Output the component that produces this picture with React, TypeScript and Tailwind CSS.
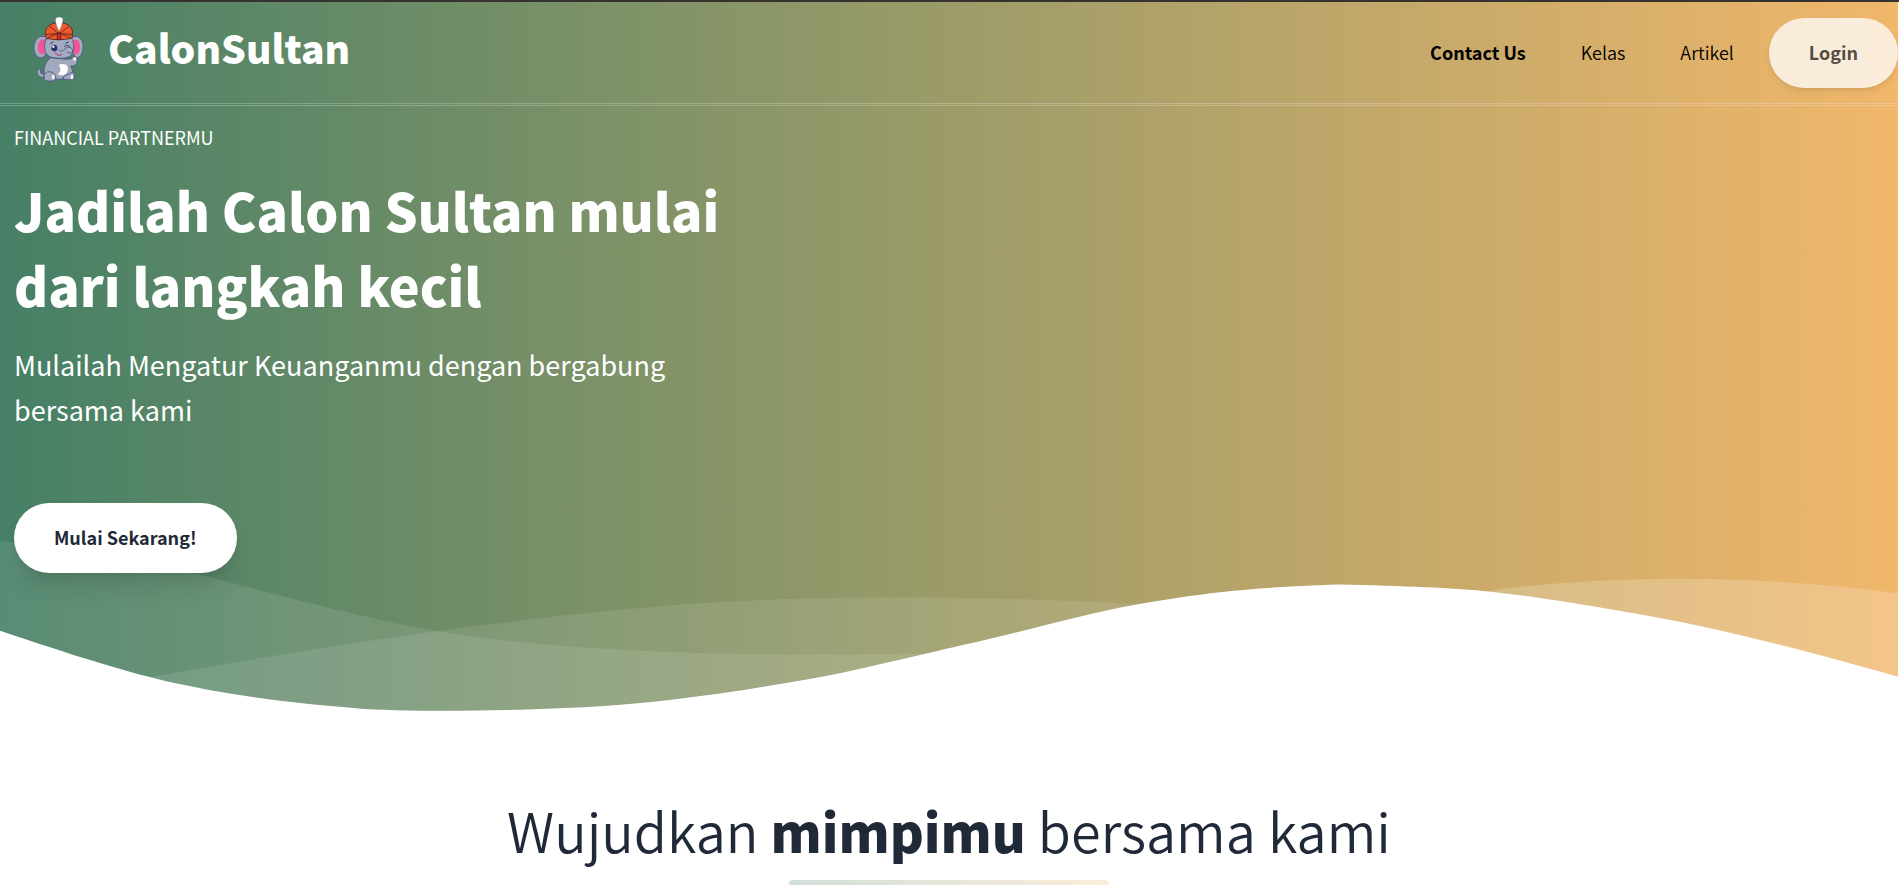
import React from "react";

function Elephant() {
  return (
    <svg viewBox="40 22 153 201" className="h-[67px] w-[51px] shrink-0" role="img" aria-label="CalonSultan logo">
      <g stroke="#4b4f86" strokeWidth="2.5" strokeLinecap="round" strokeLinejoin="round">
        <path d="M74 206C60 208 52 200 53 188C52 180 61 178 63 185C60 192 64 198 76 196" fill="#a3a9bd" />
        <path d="M80 86C62 76 45 90 43 112C41 134 52 150 66 147C74 145 80 138 82 128Z" fill="#a3a9bd" />
        <path d="M78 94C62 88 53 104 55 120C57 138 70 142 80 130Z" fill="#f2549a" stroke="none" />
        <path d="M156 88C172 76 188 88 190 108C191 130 184 146 170 148L158 130Z" fill="#a3a9bd" />
        <path d="M158 96C172 88 182 98 181 116C181 132 174 138 162 138Z" fill="#f2549a" stroke="none" />
        <path d="M92 148C78 158 70 178 74 198C80 216 150 216 160 200C160 186 156 176 152 172C166 174 174 166 173 150C172 142 158 140 156 150L144 152Z" fill="#a3a9bd" />
        <path d="M79 92C72 108 73 130 84 140C96 151 138 152 152 142C164 132 165 106 157 90C136 82 98 82 79 92Z" fill="#a3abc0" />
        <path d="M117 168C138 162 148 172 144 186C141 200 124 204 114 196C124 190 124 178 117 168Z" fill="#fff" stroke="none" />
        <path d="M73 204C72 188 92 184 104 196C112 208 108 217 98 217H84C76 217 72 212 73 204Z" fill="#a3a9bd" />
        <path d="M130 206C136 198 148 198 154 192C162 188 166 198 163 207C161 215 150 213 142 213C136 213 130 212 130 206Z" fill="#a3a9bd" />
        <path d="M118 124C124 130 132 128 136 120C142 114 154 114 158 122C164 132 152 138 142 130" fill="none" />
      </g>
      <g fill="none" stroke="#31356e" strokeWidth="3" strokeLinecap="round">
        <path d="M93 104L100 100M138 104L146 100M134 113C140 108 146 110 150 114" />
        <path d="M106 130C109 138 117 143 125 138" stroke="#b02a6b" />
      </g>
      <ellipse cx="104" cy="118" rx="9" ry="10" fill="#263070" />
      <circle cx="101" cy="114" r="3.5" fill="#fff" />
      <g fill="#fff">
        <ellipse cx="101" cy="205" rx="4" ry="7" />
        <ellipse cx="157" cy="205" rx="4" ry="7" />
        <ellipse cx="165" cy="151" rx="4" ry="5" />
      </g>
      <g stroke="#5b1d1b" strokeWidth="2.5" strokeLinejoin="round">
        <path d="M78 78C74 54 94 42 118 42C142 42 162 54 158 78C159 84 156 90 150 90C130 94 104 94 86 90C80 89 77 84 78 78Z" fill="#ee5a2b" />
        <path d="M79 78C98 74 138 74 158 78M117 76C108 66 96 57 89 54M120 76C130 66 142 57 148 54M84 88C96 80 106 78 113 77M152 88C140 80 130 78 123 77" fill="none" />
        <path d="M114 72H122L124 93H112Z" fill="#b8301f" />
        <path d="M118 68C112 56 108 44 107 34C108 26 114 25 118 25C123 25 130 26 130 35C128 46 124 58 118 68Z" fill="#fff" stroke="#777" strokeWidth="1.5" />
      </g>
    </svg>
  );
}

function Waves() {
  return (
    <svg viewBox="0 0 1428 174" className="-mt-[120px] block w-full" aria-hidden="true" fill="#fff">
      <g transform="translate(-2 44)">
        <path
          d="M0,0 C90.7283404,0.927527913 147.912752,27.187927 291.910178,59.9119003 C387.908462,81.7278826 543.605069,89.334785 759,82.7326078 C469.336065,156.254352 216.336065,153.6679 0,74.9732496"
          opacity="0.1"
        />
        <path
          d="M100,104.708498 C277.413333,72.2345949 426.147877,52.5246657 546.203633,45.5787101 C666.259389,38.6327546 810.524845,41.7979068 979.000999,55.0741668 C931.069965,56.122511 810.303266,74.8455141 616.699903,111.243176 C423.096539,147.640838 250.863238,145.462612 100,104.708498 Z"
          opacity="0.1"
        />
        <path
          d="M1046,51.6521276 C1130.83045,29.328812 1279.08318,17.607883 1439,40.1656806 L1439,120 C1271.17211,77.9435312 1140.17211,55.1609071 1046,51.6521276 Z"
          opacity="0.2"
        />
      </g>
      <path
        transform="translate(-4 76)"
        d="M0.457,34.035 C57.086,53.198 98.208,65.809 123.822,71.865 C181.454,85.495 234.295,90.29 272.033,93.459 C311.355,96.759 396.635,95.801 461.025,91.663 C486.76,90.01 518.727,86.372 556.926,80.752 C595.747,74.596 622.372,70.008 636.799,66.991 C663.913,61.324 712.501,49.503 727.605,46.128 C780.47,34.317 818.839,22.532 856.324,15.904 C922.689,4.169 955.676,2.522 1011.185,0.432 C1060.705,1.477 1097.39,3.129 1121.236,5.387 C1161.703,9.219 1208.621,17.821 1235.4,22.304 C1285.855,30.748 1354.351,47.432 1440.886,72.354 L1441.191,104.352 L1.121,104.031 L0.457,34.035 Z"
      />
    </svg>
  );
}

function Header() {
  return (
    <header>
      <div className="flex h-[101px] items-center justify-between">
        <a href="#" className="flex items-center gap-6 pb-1.5 pl-[33px] text-[39px] leading-[60px] font-black text-white">
          <Elephant />
          <span className="pb-1.5">CalonSultan</span>
        </a>
        <nav className="flex items-center text-[18px] leading-[30px] text-black">
          <a href="#contact" className="mr-[15px] px-5 pb-0.5 font-bold">Contact Us</a>
          <a href="#kelas" className="mr-[15px] px-5 pb-0.5 font-[350]">Kelas</a>
          <a href="#artikel" className="mr-[15px] px-5 pb-0.5 font-[350]">Artikel</a>
          <button className="h-[70px] rounded-full bg-white px-10 pb-0.5 font-bold text-[#1f2937] opacity-75 shadow-md">
            Login
          </button>
        </nav>
      </div>
      <div className="h-[3px] border-y border-gray-100/25 bg-clip-padding" />
    </header>
  );
}

export default function App() {
  return (
    <div className="min-h-screen overflow-hidden border-t-2 border-[#35322f] bg-white pr-px font-['Noto_Sans_CJK_JP','Noto_Sans_CJK_SC',sans-serif]">
      <div className="bg-[linear-gradient(90deg,#468066,#f1b76b)]">
        <Header />
        <section className="relative z-10 flex max-w-[760px] flex-col items-start px-[14px] pt-4 pb-[30px] text-white">
          <p className="text-[18px] leading-[30px]">FINANCIAL PARTNERMU</p>
          <h1 className="mt-5 text-[52px] leading-[75px] font-black">Jadilah Calon Sultan mulai dari langkah kecil</h1>
          <p className="mt-5 mb-[71px] max-w-[700px] text-[27px] leading-[45px]">
            Mulailah Mengatur Keuanganmu dengan bergabung bersama kami
          </p>
          <button className="h-[70px] rounded-full bg-white px-10 pb-0.5 text-[18px] font-bold text-[#1f2937] shadow-xl">
            Mulai Sekarang!
          </button>
        </section>
        <Waves />
      </div>
      <section className="flex flex-col items-center pt-[78px] text-[#1f2937]">
        <h2 className="text-center text-[54px] leading-[75px] font-[350]">
          Wujudkan <span className="text-[52px] font-black">mimpimu</span> bersama kami
        </h2>
        <div className="mt-3 h-[5px] w-80 rounded-t bg-[linear-gradient(90deg,#468066,#f1b76b)] opacity-25" />
      </section>
    </div>
  );
}
